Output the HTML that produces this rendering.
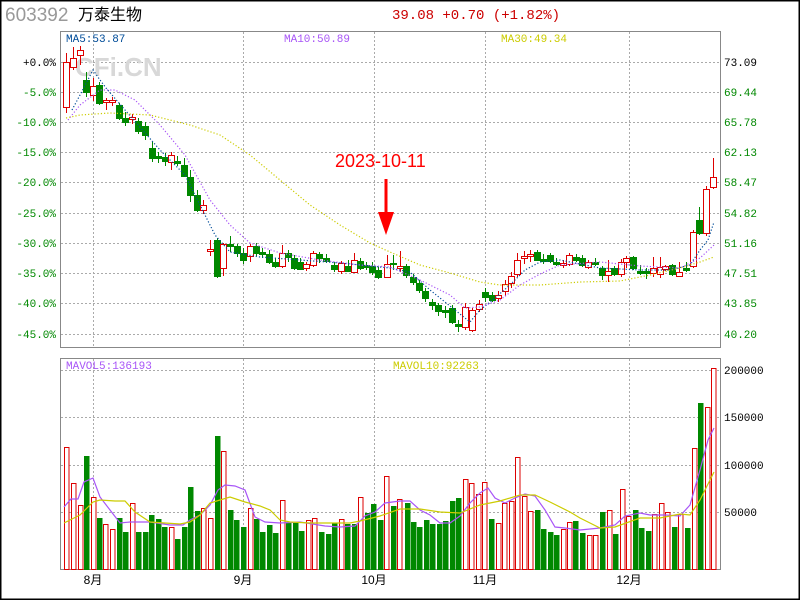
<!DOCTYPE html>
<html><head><meta charset="utf-8"><style>
html,body{margin:0;padding:0;background:#fff}
svg{display:block}
text{font-family:"Liberation Mono","Noto Sans CJK SC",monospace}
</style></head><body>
<svg id="s" width="800" height="600" xmlns="http://www.w3.org/2000/svg">
<rect x="0.5" y="0.5" width="799" height="599" fill="#fff" stroke="#000" stroke-width="2"/>
<text x="5" y="21" font-size="19" fill="#999" style="font-family:'Liberation Sans',sans-serif">603392</text>
<text x="78" y="20" font-size="16" fill="#000" style="font-family:'Liberation Sans','Noto Sans CJK SC',sans-serif">万泰生物</text>
<text x="392" y="19" font-size="14" fill="#c00">39.08 +0.70 (+1.82%)</text>
<rect x="60.5" y="31.5" width="660" height="316" fill="none" stroke="#888"/>
<rect x="60.5" y="358.5" width="660" height="211" fill="none" stroke="#888"/>
<g id="grid" stroke="#aaa" stroke-dasharray="2 2" stroke-width="1"></g>
<text x="75" y="76" font-size="26" font-weight="bold" fill="#d8d8d8" style="font-family:'Liberation Sans',sans-serif">CFi.CN</text>
<g id="lab" font-size="11"></g>
<text x="66" y="42" font-size="11" fill="#004c99">MA5:53.87</text>
<text x="284" y="42" font-size="11" fill="#a855f7">MA10:50.89</text>
<text x="501" y="42" font-size="11" fill="#cccc00">MA30:49.34</text>
<text x="66" y="369" font-size="11" fill="#a855f7">MAVOL5:136193</text>
<text x="393" y="369" font-size="11" fill="#cccc00">MAVOL10:92263</text>
<g id="c"></g>
<text x="335" y="167" font-size="18" fill="#f00" style="font-family:'Liberation Sans',sans-serif">2023-10-11</text>
<rect x="384.5" y="179" width="3" height="40" fill="#f00"/>
<polygon points="378,212 394,212 386,235" fill="#f00"/>
</svg>
<script>
var NS="http://www.w3.org/2000/svg",s=document.getElementById('s');
function el(p,t,a,txt){var e=document.createElementNS(NS,t);for(var k in a)e.setAttribute(k,a[k]);if(txt)e.textContent=txt;p.appendChild(e);return e;}
var g=document.getElementById('grid'),lab=document.getElementById('lab'),c=document.getElementById('c');
var hy=[62,92,122,152,182,213,243,273,303,334],pct=["+0.0%","-5.0%","-10.0%","-15.0%","-20.0%","-25.0%","-30.0%","-35.0%","-40.0%","-45.0%"],pr=["73.09","69.44","65.78","62.13","58.47","54.82","51.16","47.51","43.85","40.20"];
hy.forEach(function(y,i){el(g,'line',{x1:61,x2:720,y1:y+.5,y2:y+.5});
el(lab,'text',{x:56,y:y+4,'text-anchor':'end',fill:i==0?'#000':'#080'},pct[i]);
el(lab,'text',{x:724,y:y+4,fill:i==0?'#000':'#080'},pr[i]);});
[370,417,465,512].forEach(function(y,i){el(g,'line',{x1:61,x2:720,y1:y+.5,y2:y+.5});
el(lab,'text',{x:724,y:y+4,fill:'#000'},["200000","150000","100000","50000"][i]);});
[[93,"8月"],[243,"9月"],[374,"10月"],[485,"11月"],[629,"12月"]].forEach(function(m){
el(g,'line',{x1:m[0]+.5,x2:m[0]+.5,y1:32,y2:347});el(g,'line',{x1:m[0]+.5,x2:m[0]+.5,y1:359,y2:569});
el(lab,'text',{x:m[0],y:584,'text-anchor':'middle',fill:'#000',style:"font-family:'Liberation Sans','Noto Sans CJK SC',sans-serif",'font-size':12},m[1]);});
// candles: x, top, bottom, high, low, up(1 red)
var K=[[66,62,107,53,113,1],[73,58,67,47,70,1],[80,50,55,46,65,1],[86,80,92,72,97,0],[93,86,95,78,101,1],[99,85,103,82,105,0],[106,100,102,98,110,1],[112,100,102,97,106,1],[119,105,118,103,120,0],[125,118,122,112,126,0],[132,117,119,114,124,1],[138,121,131,118,134,0],[145,126,135,122,140,0],[152,148,158,142,162,0],[158,156,158,152,163,0],[165,157,161,153,166,0],[171,155,162,152,170,1],[177,161,163,156,166,0],[184,165,176,158,176,0],[190,177,195,170,202,0],[197,195,210,190,212,0],[203,205,210,200,214,1],[210,249,251,240,256,1],[217,240,276,238,278,0],[223,244,268,243,276,1],[230,244,246,236,252,0],[237,246,253,244,257,0],[243,253,260,248,264,0],[250,246,256,244,262,1],[256,246,253,243,256,0],[262,252,254,248,258,0],[269,254,262,250,264,0],[275,262,266,258,268,0],[282,253,266,245,268,1],[288,253,257,250,262,0],[294,258,268,255,270,0],[300,262,269,258,270,0],[306,264,268,262,271,1],[313,253,265,251,267,1],[319,254,258,252,263,0],[326,258,261,254,263,0],[334,265,269,262,272,0],[341,263,271,261,274,1],[348,266,271,260,272,0],[354,260,272,253,273,1],[360,261,268,258,270,0],[366,265,267,262,270,0],[372,266,272,262,275,0],[378,270,277,266,279,0],[387,264,277,255,278,1],[393,263,264,255,270,0],[400,266,268,251,272,1],[406,266,275,264,278,0],[413,277,282,274,285,0],[419,283,290,280,293,0],[425,291,298,288,302,0],[432,302,305,299,310,0],[438,305,311,303,316,0],[445,310,312,306,318,0],[452,308,322,305,324,0],[458,324,326,320,332,0],[465,307,327,303,330,1],[472,310,330,308,332,1],[479,304,309,300,312,1],[485,292,297,288,302,0],[492,295,300,292,302,0],[498,295,298,291,302,1],[505,284,291,280,296,1],[511,276,283,272,288,1],[517,260,274,253,277,1],[524,256,258,251,264,1],[530,254,256,250,262,1],[537,252,260,250,261,0],[543,259,261,254,264,0],[550,255,261,253,263,0],[556,262,264,258,266,0],[563,263,265,260,268,1],[569,255,264,253,266,1],[576,257,260,254,262,0],[582,258,265,255,267,0],[588,262,267,260,269,1],[595,262,264,258,266,0],[602,268,275,266,280,0],[608,271,275,260,282,1],[614,268,274,266,276,0],[621,262,274,259,277,1],[626,258,262,256,268,1],[633,257,268,256,270,0],[640,271,273,265,275,0],[646,271,273,268,279,0],[653,268,273,257,277,1],[660,267,274,257,278,1],[665,266,269,265,271,1],[672,265,274,264,276,0],[679,272,276,262,277,1],[686,268,270,262,272,0],[693,232,266,230,268,1],[699,220,233,207,235,0],[706,189,233,186,236,1],[713,177,187,158,189,1]];
K.forEach(function(k){var col=k[5]?'#d00':'#080';
el(c,'line',{x1:k[0]+.5,x2:k[0]+.5,y1:k[3],y2:k[4],stroke:col});
var h=Math.max(1,k[2]-k[1]);
if(k[5])el(c,'rect',{x:k[0]-2.5,y:k[1]+.5,width:6,height:h,fill:'#fff',stroke:col});
else el(c,'rect',{x:k[0]-3,y:k[1],width:7,height:h+1,fill:col});});
function pl(pts,col,dash){el(c,'polyline',{points:pts,fill:'none',stroke:col,'stroke-width':1.2,'stroke-dasharray':dash||''});}
pl("72,110 80,95 93,70 100,80 106,88 125,110 160,150 185,175 200,205 215,235 230,252 260,257 300,260 340,263 370,266 390,268 410,272 430,290 455,310 470,322 480,310 495,298 510,285 525,270 540,262 560,260 600,268 640,270 670,270 690,265 700,250 708,240 714,222","#004c99","1.2 2");
pl("68,120 80,105 100,90 115,90 135,100 160,125 185,155 210,200 230,225 250,243 280,253 320,260 360,265 390,267 420,280 450,295 465,308 480,307 500,300 520,285 540,274 560,265 600,262 640,266 680,268 700,258 714,245","#a855f7","1.2 2");
pl("66,118 80,115 110,113 150,115 190,125 220,135 250,155 280,180 310,205 340,225 370,243 390,252 420,265 450,273 480,282 500,285 540,285 580,282 620,281 650,275 680,268 700,262 714,257","#cccc00","1.2 2");
// volume
var V=[[64,447,1],[71,483,1],[78,505,1],[84,456,0],[91,497,1],[97,518,0],[103,524,1],[110,529,1],[117,518,0],[123,532,0],[130,503,1],[136,532,0],[143,532,0],[149,515,0],[156,519,0],[162,527,0],[169,527,1],[175,539,0],[182,527,0],[188,487,0],[195,511,0],[201,508,1],[208,518,1],[215,436,0],[221,451,1],[228,510,0],[234,520,0],[241,527,0],[248,508,1],[254,519,0],[260,532,0],[267,525,0],[273,533,0],[280,500,1],[286,523,0],[293,523,0],[299,531,0],[306,520,1],[312,518,1],[319,532,0],[326,534,0],[332,523,0],[339,519,1],[345,524,0],[352,524,0],[358,497,1],[365,513,0],[371,504,0],[378,520,0],[384,476,1],[391,506,0],[397,499,1],[405,503,0],[411,522,0],[417,527,0],[424,520,0],[430,524,0],[437,524,0],[443,521,0],[450,501,0],[456,498,0],[463,479,1],[469,483,1],[476,494,1],[482,482,1],[489,519,0],[496,523,1],[502,503,1],[509,501,1],[515,457,1],[522,496,1],[528,511,1],[535,510,0],[541,529,0],[548,532,0],[554,535,0],[561,529,1],[567,522,1],[573,521,0],[580,533,0],[587,535,1],[593,535,1],[600,512,0],[607,510,1],[613,534,0],[620,489,1],[626,516,1],[633,510,0],[639,528,0],[646,531,0],[652,514,1],[659,503,1],[665,512,1],[672,527,0],[678,514,1],[685,528,0],[692,448,1],[698,403,0],[705,407,1],[711,368,1]];
V.forEach(function(v){if(v[2])el(c,'rect',{x:v[0]+.5,y:v[1]+.5,width:4.5,height:569-v[1],fill:'#fff',stroke:'#d00'});
else el(c,'rect',{x:v[0],y:v[1],width:5.5,height:570-v[1],fill:'#080'});});
pl("64,507 71,499 78,499 84,482 93,478 100,497 110,510 120,523 130,522 150,522 170,525 183,525 190,520 200,515 210,505 218,490 225,485 235,486 245,490 255,517 265,522 280,523 300,522 325,526 340,527 355,526 365,516 375,512 385,503 400,501 410,501 420,510 430,515 440,523 450,523 460,516 470,503 480,493 488,488 495,498 505,503 515,498 525,494 535,496 545,510 555,527 565,528 580,530 600,528 615,525 625,516 640,513 650,515 665,515 680,516 690,505 700,470 708,440 714,428","#a855f7");
pl("64,523 80,515 93,502 100,500 115,501 125,501 135,512 150,522 180,524 190,522 200,515 210,503 220,500 230,497 245,502 260,506 270,510 280,520 290,522 310,523 350,523 360,521 380,516 400,509 420,509 440,512 460,513 480,505 500,501 520,495 535,495 550,502 570,512 580,518 600,528 615,527 640,518 660,518 680,514 690,515 700,500 714,472","#cccc00");
</script>
</body></html>
